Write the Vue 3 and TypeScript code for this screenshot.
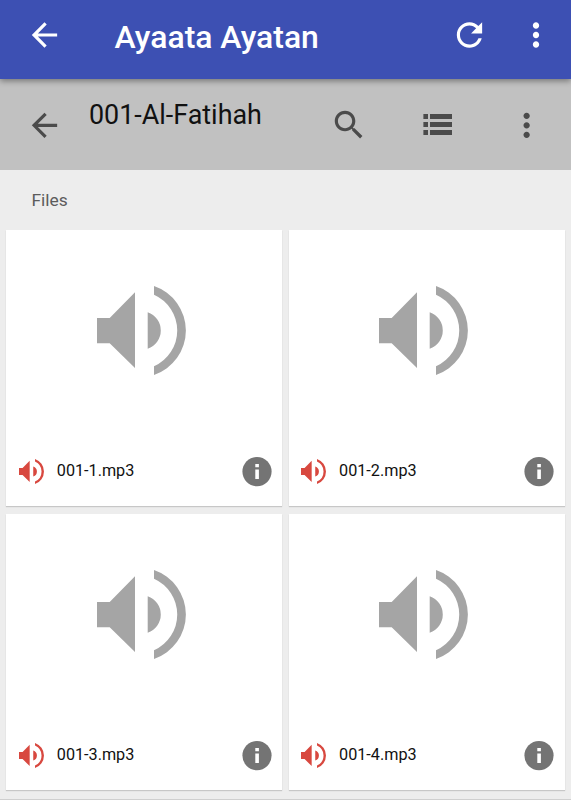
<script setup lang="ts">
interface AudioFile {
  name: string
}

const files: AudioFile[] = [
  { name: '001-1.mp3' },
  { name: '001-2.mp3' },
  { name: '001-3.mp3' },
  { name: '001-4.mp3' },
]

const arrow = 'M20 11H7.83l5.59-5.59L12 4l-8 8 8 8 1.41-1.41L7.83 13H20v-2z'
const dots =
  'M12 8c1.1 0 2-.9 2-2s-.9-2-2-2-2 .9-2 2 .9 2 2 2zm0 2c-1.1 0-2 .9-2 2s.9 2 2 2 2-.9 2-2-.9-2-2-2zm0 6c-1.1 0-2 .9-2 2s.9 2 2 2 2-.9 2-2-.9-2-2-2z'
const refresh =
  'M17.65 6.35C16.2 4.9 14.21 4 12 4c-4.42 0-7.99 3.58-7.99 8s3.57 8 7.99 8c3.73 0 6.84-2.55 7.73-6h-2.08c-.82 2.33-3.04 4-5.65 4-3.31 0-6-2.69-6-6s2.69-6 6-6c1.66 0 3.14.69 4.22 1.78L13 11h7V4l-2.35 2.35z'
const search =
  'M15.5 14h-.79l-.28-.27C15.41 12.59 16 11.11 16 9.5 16 5.91 13.09 3 9.5 3S3 5.91 3 9.5 5.91 16 9.5 16c1.61 0 3.09-.59 4.23-1.57l.27.28v.79l5 4.99L20.49 19l-4.99-5zm-6 0C7.01 14 5 11.99 5 9.5S7.01 5 9.5 5 14 7.01 14 9.5 11.99 14 9.5 14z'
const volume =
  'M0 32h12.7L38 6.3V82L12.7 57.3H0zM50.7 26.3a19.2 19.2 0 0 1 0 36.4zM57 0a47 47 0 0 1 0 89v-8.7a39.2 39.2 0 0 0 0-71.6z'
</script>

<template>
  <div class="screen">
    <header class="app-bar">
      <svg class="icon" viewBox="-0.3 0 24 24"><path :d="arrow" /></svg>
      <h1 class="app-title">Ayaata Ayatan</h1>
      <svg class="icon refresh" viewBox="-0.3 0 24 24"><path :d="refresh" /></svg>
      <svg class="icon" viewBox="0 0 24 24"><path :d="dots" /></svg>
    </header>
    <div class="folder-bar">
      <svg class="icon" viewBox="-0.3 -0.2 24 24"><path :d="arrow" /></svg>
      <h2 class="folder-title">001-Al-Fatihah</h2>
      <svg class="icon" viewBox="0 0 24 24"><path :d="search" /></svg>
      <svg class="list" viewBox="0 0 29 21">
        <path d="M.4 0H5v5H.4zM7 0h22v5H7zM.4 8H5v5H.4zM7 8h22v5H7zM.4 16H5v5H.4zM7 16h22v5H7z" />
      </svg>
      <svg class="icon" viewBox="-0.4 -0.2 24 24"><path :d="dots" /></svg>
    </div>
    <main class="content">
      <div class="section">Files</div>
      <div class="grid">
        <article v-for="file in files" :key="file.name" class="card">
          <div class="preview">
            <svg class="volume-large" viewBox="0 0 89 89"><path :d="volume" /></svg>
          </div>
          <div class="meta">
            <svg class="volume-small" viewBox="0 0 89 89"><path :d="volume" /></svg>
            <span class="name">{{ file.name }}</span>
            <svg class="info" viewBox="0 0.4 30 30">
              <circle cx="15" cy="15" r="14.6" />
              <path d="M13.3 7.3h3.6v3.4h-3.6zM13.3 12.8h3.6v9.6h-3.6z" />
            </svg>
          </div>
        </article>
      </div>
      <div class="bottom-edge"></div>
    </main>
  </div>
</template>

<style scoped>
.screen {
  width: 571px;
  height: 800px;
  overflow: hidden;
  display: flex;
  flex-direction: column;
  background: #ededed;
  font-family: Roboto, sans-serif;
}
svg {
  display: block;
  flex: none;
}
h1,
h2 {
  margin: 0;
  white-space: nowrap;
}
.icon {
  width: 38px;
  height: 38px;
}
.app-bar {
  position: relative;
  box-sizing: border-box;
  height: 79px;
  flex: none;
  display: flex;
  align-items: center;
  padding: 0 16px 9px 25px;
  background: #3d50b3;
  color: #fff;
  fill: #fff;
  box-shadow: 0 2px 6px rgba(0, 0, 0, 0.4);
}
.app-title {
  flex: 1;
  margin-left: 51.5px;
  padding-top: 4px;
  font-size: 31.9px;
  line-height: 38px;
  font-weight: 500;
}
.refresh {
  margin-right: 29px;
}
.folder-bar {
  box-sizing: border-box;
  height: 91px;
  flex: none;
  display: flex;
  align-items: center;
  padding: 1px 26px 0 25px;
  background: #c1c1c1;
  fill: #4b4b4b;
}
.folder-title {
  flex: 1;
  margin-left: 26px;
  padding-bottom: 21px;
  font-size: 26.9px;
  line-height: 32px;
  font-weight: 400;
  color: #111;
}
.list {
  width: 29px;
  height: 21px;
  margin: 0 55px 1px;
}
.content {
  flex: 1;
}
.section {
  box-sizing: border-box;
  height: 60px;
  padding-left: 31.5px;
  font-size: 17.4px;
  line-height: 61px;
  color: #5c5c5c;
}
.grid {
  display: grid;
  grid-template-columns: 276px 276px;
  grid-auto-rows: 276px;
  gap: 8px 6.3px;
  padding-left: 6.3px;
}
.card {
  display: flex;
  flex-direction: column;
  background: #fff;
  box-shadow: 0 1px 1px rgba(0, 0, 0, 0.16);
}
.preview {
  box-sizing: border-box;
  height: 206px;
  flex: none;
  padding: 55.7px 0 0 90.5px;
}
.volume-large {
  width: 89px;
  height: 89px;
  fill: #a5a5a5;
}
.meta {
  box-sizing: border-box;
  height: 70px;
  display: flex;
  align-items: center;
  padding: 2px 10.4px 0 12.7px;
}
.volume-small {
  width: 25px;
  height: 25px;
  margin-bottom: 1px;
  fill: #d8483f;
}
.name {
  flex: 1;
  margin-left: 12.8px;
  padding-bottom: 2px;
  font-size: 16.2px;
  line-height: 20px;
  color: #111;
}
.info {
  width: 30px;
  height: 30px;
  fill: #747474;
}
.info path {
  fill: #fff;
}
.bottom-edge {
  height: 2px;
  margin-top: 8.5px;
  background: #cfcfcf;
}
</style>
